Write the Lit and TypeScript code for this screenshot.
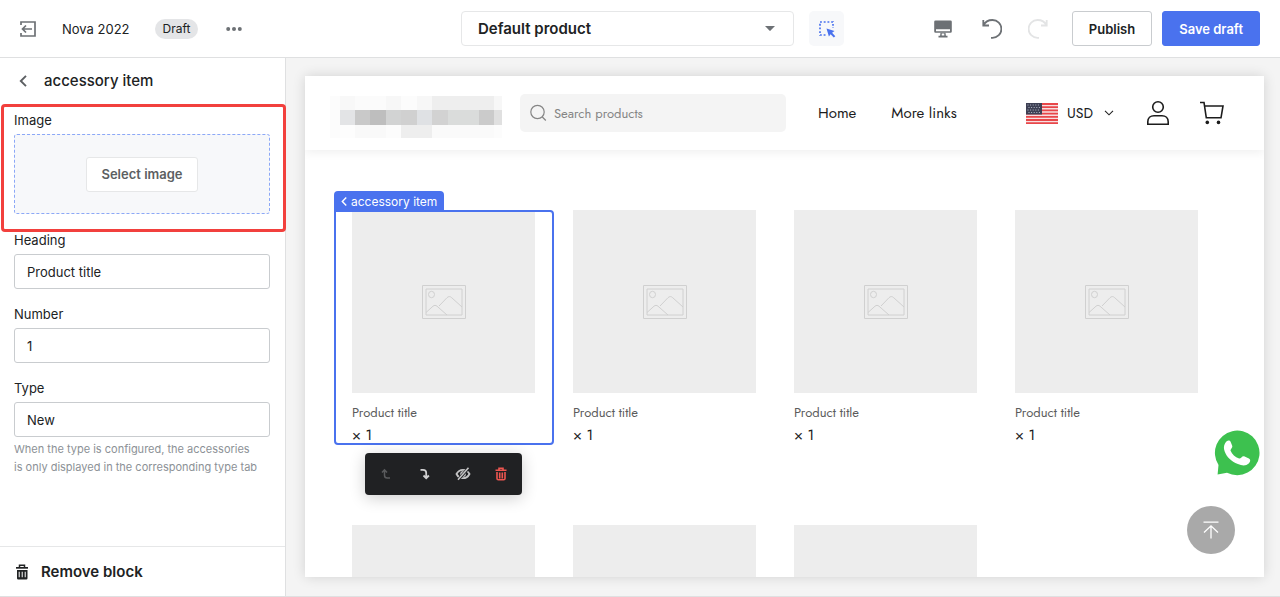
import { LitElement, html, svg, css } from "lit";
import { customElement, property } from "lit/decorators.js";

const LOGO_TILES: [number, number, number, number, string][] = [
  [0, 0, 10, 42, "#fcfcfc"],
  [10, 0, 15, 14, "#f8f8f8"], [25, 0, 31, 14, "#fbfbfb"], [56, 0, 15, 14, "#f7f7f7"],
  [71, 0, 16, 14, "#fcfcfc"], [87, 0, 15, 14, "#f7f7f7"], [102, 0, 62, 14, "#eeeeee"],
  [164, 0, 8, 14, "#f7f7f7"],
  [10, 14, 15, 15, "#e3e4e6"], [25, 14, 15, 15, "#c9c9c9"], [40, 14, 16, 15, "#bebebe"],
  [56, 14, 15, 15, "#d2d3d3"], [71, 14, 16, 15, "#d0d0d0"], [87, 14, 15, 15, "#dfe1e4"],
  [102, 14, 16, 15, "#d2d2d2"], [118, 14, 31, 15, "#dadcdb"], [149, 14, 15, 15, "#cbcbcb"],
  [164, 14, 8, 15, "#e0e0e0"],
  [10, 29, 15, 13, "#fdfdfd"], [25, 29, 31, 13, "#f9f9f9"], [56, 29, 15, 13, "#fcfcfc"],
  [71, 29, 31, 13, "#eeeeee"], [102, 29, 62, 13, "#fafafa"], [164, 29, 8, 13, "#fcfcfc"],
];

const icons = {
  exit: svg`<svg width="18" height="18" viewBox="0 0 18 18" fill="none" stroke="#6d7175" stroke-width="1.7"><path d="M2 5V2h14v14H2v-3M13 9H3.500M7 5.500 3.500 9 7 12.500"/></svg>`,
  dots: svg`<svg width="16" height="6" viewBox="0 0 16 6" fill="#6d7175"><circle cx="2.200" cy="3" r="2"/><circle cx="8" cy="3" r="2"/><circle cx="13.800" cy="3" r="2"/></svg>`,
  picker: svg`<svg width="18" height="18" viewBox="0 0 18 18"><path d="M2 2h13v13H2z" fill="none" stroke="#4a72ee" stroke-width="1.700" stroke-dasharray="1.900 1.820"/><path d="M8 8h10v10H8z" fill="#f7f8fa"/><path d="m8.500 8.500 8 2.600-2.400 1.700 3.200 3.400-1.500 1.400-3.200-3.400-1.700 2.300z" fill="#4a72ee"/></svg>`,
  desktop: svg`<svg width="18" height="18" viewBox="0 0 18 18" fill="#6d7175"><path fill-rule="evenodd" d="M1.500.5h15a1.300 1.300 0 0 1 1.300 1.300v9.700a1.300 1.300 0 0 1-1.300 1.300h-15A1.300 1.300 0 0 1 .2 11.500V1.800A1.300 1.300 0 0 1 1.500.5zM2 9.300v1.900h14V9.300z"/><path d="M6.500 12.800h5l.4 2.900h1.600v1.700h-9v-1.700h1.600z"/><path d="M7.700 13.500h2.600v2H7.700z" fill="#fff"/></svg>`,
  undo: svg`<svg width="20" height="20" viewBox="0 0 20 20" fill="none" stroke="currentColor" stroke-width="1.800"><path d="M1.300 1v5.500H7M1.600 6.300C3 3 6.500 1 10.500 1a8.800 8.800 0 0 1 0 17.800H9"/></svg>`,
  redo: svg`<svg width="20" height="20" viewBox="0 0 20 20" fill="none" stroke="currentColor" stroke-width="1.800"><path d="M18.700 1v5.500H13M18.400 6.300C17 3 13.500 1 9.500 1a8.800 8.800 0 0 0 0 17.800H11"/></svg>`,
  back: svg`<svg width="8" height="12" viewBox="0 0 8 12" fill="none" stroke="currentColor" stroke-width="1.900"><path d="M7 .8 1.800 6 7 11.200"/></svg>`,
  trash: svg`<svg width="14" height="16" viewBox="0 0 14 16"><path d="M4.500 3V1.200h5V3" fill="none" stroke="currentColor" stroke-width="1.500"/><path d="M1 3h12v1.700H1z" fill="currentColor"/><path fill-rule="evenodd" d="M2 6h10.500v8.300a1.200 1.200 0 0 1-1.200 1.200H3.200A1.200 1.200 0 0 1 2 14.300zM3.700 7.700v5.500h1V7.700zm3 0v5.500h1V7.700zm3 0v5.500h1V7.700z" fill="currentColor"/></svg>`,
  search: svg`<svg width="18" height="18" viewBox="0 0 18 18" fill="none" stroke="#858585" stroke-width="1.200"><circle cx="7.500" cy="8" r="6.700"/><path d="m12.300 13 3.500 3.500"/></svg>`,
  user: svg`<svg width="24" height="26" viewBox="0 0 24 26" fill="none" stroke="#1c1c1c" stroke-width="1.600"><circle cx="12" cy="7" r="5.300"/><path d="M1.800 24.200v-2.400c0-3.600 2.600-6 6.200-6h8c3.600 0 6.200 2.400 6.200 6v2.400z"/></svg>`,
  cart: svg`<svg width="26" height="24" viewBox="0 0 26 24" fill="none" stroke="#1c1c1c" stroke-width="1.600"><path d="M1 1.500h4l2.300 15.300H22L24 5H5.600"/><circle cx="8.300" cy="21.400" r="1.800" fill="#1c1c1c" stroke="none"/><circle cx="19.500" cy="21.400" r="1.800" fill="#1c1c1c" stroke="none"/></svg>`,
  picture: svg`<svg width="44" height="34" viewBox="0 0 44 34" fill="none" stroke="#d0d0d0"><path d="M.5.5h43v33H.5zM4 4h36v26H4z"/><ellipse cx="9.500" cy="9.500" rx="3" ry="3.200"/><path d="m4 27.500 7-6.300c1.200-1.100 2.800-1.100 4 0l10 8.800M17 21l8-8.300c1.400-1.500 3.300-1.500 4.700 0L40 22"/></svg>`,
  moveUp: svg`<svg width="12" height="12" viewBox="0 0 12 12" fill="none" stroke="#5a5b5d" stroke-width="1.500"><path d="M3.500 2v5.200c0 1.800.9 2.800 2.700 2.800H9M1 4.500 3.500 1.800 6 4.500"/></svg>`,
  moveDown: svg`<svg width="12" height="12" viewBox="0 0 12 12" fill="none" stroke="#d0d0d1" stroke-width="1.800"><path d="M1.500 1.900H4C6 1.900 7.200 3 7.200 4.800V10M4.500 7.500l2.700 2.700 2.700-2.700"/></svg>`,
  hide: svg`<svg width="16" height="14" viewBox="0 0 16 14" fill="none" stroke="#c4c4c5" stroke-width="1.800"><path d="M1.500 7C3 4 5.300 2.800 8 2.800S13 4 14.500 7C13 10 10.700 11.200 8 11.200S3 10 1.500 7z"/><circle cx="8" cy="7" r="2" fill="#c4c4c5"/><path d="M13.500 1 3 13" stroke="#202123" stroke-width="3"/><path d="M13.500.8 3 12.800" stroke-width="1.500"/></svg>`,
  remove: svg`<svg width="12" height="14" viewBox="0 0 12 14" fill="none" stroke="#ee5650" stroke-width="1.600"><path d="M.5 3.200h11M4 3V1.300h4V3"/><path d="M2 5v6.500q0 1.300 1.300 1.300h5.400q1.300 0 1.300-1.300V5M4.700 5.500v6M7.300 5.500v6"/></svg>`,
  flag: svg`<svg width="32" height="21" viewBox="0 0 32 21"><path d="M0 0h32v21H0z" fill="#f7dfe0"/><path d="M0 1h32M0 4.200h32M0 7.400h32M0 10.600h32M0 13.800h32M0 17h32M0 20.200h32" stroke="#e8474a" stroke-width="1.800"/><path d="M0 0h16v11.500H0z" fill="#3d4054"/><path d="M1.500 2h13M2.500 4.500h12M1.500 7h13M2.500 9.500h12" stroke="#b4b8c6" stroke-dasharray="1 1.600"/></svg>`,
  whatsapp: svg`<svg width="46" height="46" viewBox="0 0 46 46"><path d="M3.600 44.500 4.500 35A22.300 22.300 0 1 1 13 42.700z" fill="#3dc14f"/><path d="M11 13.500c1.600-3.300 4.500-4 5.700-1.500l1.500 3.700c.7 1.900-2.100 3.700-1.600 5.100 1.500 3.600 4.400 6.300 8.500 7.700 1.600.5 3.100-3 5-2.200l4.800 2.200c2 1.100 1.500 3.300-.2 5-2.600 2.500-6.500 2.400-10.800.6C17 31.300 12.800 27 10.700 21.500c-1.200-3-1-5.600.3-8z" fill="#fff"/></svg>`,
  top: svg`<svg width="16" height="18" viewBox="0 0 16 18" fill="none" stroke="#fff" stroke-width="1.300"><path d="M.5 1.200h15M8 17.500V5M1 11.500 8 4.800l7 6.700"/></svg>`,
  caret: svg`<svg width="10" height="5" viewBox="0 0 10 5"><path d="M0 0h10L5.600 4.600q-.6.600-1.200 0z" fill="#6d7175"/></svg>`,
  chevron: svg`<svg width="10" height="6" viewBox="0 0 10 6" fill="none" stroke="#222" stroke-width="1.100"><path d="m1 .8 4 4 4-4"/></svg>`,
};

const resets = css`
  :host, * { box-sizing: border-box; }
  button, input, select { font: inherit; color: inherit; margin: 0; outline: none; }
  button { display: flex; align-items: center; justify-content: center; padding: 0; border: 0; background: none; }
  select { appearance: none; border: 0; background: none; padding: 0; }
  svg { display: block; flex: none; }
`;

@customElement("editor-bar")
class EditorBar extends LitElement {
  static styles = [resets, css`
    :host { display: grid; grid-template-columns: 1fr auto 1fr; align-items: center; height: 58px; padding: 0 20px 0 19px; background: #fff; border-bottom: 1px solid #dfe0e1; }
    .group { display: flex; align-items: center; }
    .center { margin-left: 26px; }
    .name { margin-left: 25px; font-size: 13px; }
    .badge { margin-left: 25px; padding: 0 8px; height: 20px; line-height: 20px; border-radius: 10px; background: #e4e5e7; font-size: 12px; }
    .more { margin-left: 28px; }
    .template { position: relative; display: flex; align-items: center; }
    .template select { width: 333px; height: 35px; padding: 0 16px; border: 1px solid #e6e7e8; border-radius: 4px; font-size: 15px; font-weight: 600; }
    .template svg { position: absolute; right: 19px; pointer-events: none; }
    .picker { width: 35px; height: 35px; margin-left: 15px; border-radius: 5px; background: #f7f8fa; }
    .actions { justify-content: flex-end; }
    .tool { color: #6d7175; margin-right: 30px; }
    .tool.redo { color: #e3e4e5; margin-right: 24px; }
    .tool.undo { margin-right: 26px; }
    .btn { height: 35px; padding: 0 16px; border-radius: 3px; font-size: 13px; font-weight: 600; border: 1px solid #c9cccf; background: #fff; white-space: nowrap; }
    .btn.primary { margin-left: 10px; color: #fff; background: #4a72ee; border-color: #4a72ee; }
  `];
  render() {
    return html`
      <div class="group">
        <button aria-label="Exit">${icons.exit}</button>
        <span class="name">Nova 2022</span>
        <span class="badge">Draft</span>
        <button class="more" aria-label="More actions">${icons.dots}</button>
      </div>
      <div class="group center">
        <label class="template"><select aria-label="Template"><option>Default product</option></select>${icons.caret}</label>
        <button class="picker" aria-label="Inspect">${icons.picker}</button>
      </div>
      <div class="group actions">
        <button class="tool" aria-label="Desktop view">${icons.desktop}</button>
        <button class="tool undo" aria-label="Undo">${icons.undo}</button>
        <button class="tool redo" aria-label="Redo" disabled>${icons.redo}</button>
        <button class="btn">Publish</button>
        <button class="btn primary">Save draft</button>
      </div>`;
  }
}

@customElement("block-settings")
class BlockSettings extends LitElement {
  static styles = [resets, css`
    :host { display: flex; flex-direction: column; background: #fff; border-right: 1px solid #dfe0e1; font-size: 13px; }
    .title { display: flex; align-items: center; gap: 17px; height: 45px; padding-left: 19px; color: #5c5f62; }
    h2 { margin: 0; font-size: 15px; font-weight: 500; color: #202223; }
    .fields { flex: 1; padding: 0 15px 0 14px; }
    .image { position: relative; padding: 7px 0 16px; }
    .image::after { content: ""; position: absolute; z-index: 2; inset: 1px -16px -2px -13px; border: 3px solid #f2403d; border-radius: 4px; pointer-events: none; }
    .label { display: block; line-height: 20px; margin-bottom: 4px; }
    .drop { display: flex; align-items: center; justify-content: center; height: 80px; border: 1px dashed #8ca8f7; border-radius: 3px; background: #f7f8fa; }
    .select { height: 35px; padding: 0 14px; border: 1px solid #e6e7e8; border-radius: 3px; background: #fff; color: #5c5f62; font-size: 13px; font-weight: 600; }
    .field { margin-bottom: 15px; }
    input { width: 100%; height: 35px; padding: 0 12px; border: 1px solid #c9cccf; border-radius: 3px; background: #fff; }
    .help { margin: 3px 0 0; font-size: 11px; line-height: 18px; color: #8c9196; }
    .remove { justify-content: flex-start; gap: 12px; height: 50px; padding-left: 15px; border-top: 1px solid #e6e7e8; font-size: 15px; font-weight: 600; }
  `];
  render() {
    return html`
      <div class="title"><button aria-label="Back">${icons.back}</button><h2>accessory item</h2></div>
      <div class="fields">
        <div class="image">
          <span class="label" id="image-label">Image</span>
          <div class="drop" role="group" aria-labelledby="image-label"><button class="select">Select image</button></div>
        </div>
        <div class="field"><label class="label" for="heading">Heading</label><input id="heading" .value=${"Product title"}></div>
        <div class="field"><label class="label" for="number">Number</label><input id="number" .value=${"1"}></div>
        <div class="field"><label class="label" for="type">Type</label><input id="type" .value=${"New"}>
          <p class="help">When the type is configured, the accessories<br>is only displayed in the corresponding type tab</p>
        </div>
      </div>
      <button class="remove">${icons.trash}<span>Remove block</span></button>`;
  }
}

@customElement("accessory-card")
class AccessoryCard extends LitElement {
  @property({ type: Boolean }) selected = false;
  static styles = [resets, css`
    :host { display: block; position: relative; padding: 0 20px 0 18px; }
    .media { display: flex; align-items: center; justify-content: center; aspect-ratio: 1; background: #ededed; }
    .title { margin-top: 8px; line-height: 24px; font-size: 13px; color: #5c5c5c; }
    .count { line-height: 20px; font-size: 15px; color: #1c1c1c; }
    .frame { position: absolute; inset: 0 1px 0 0; border: 2px solid #4a72ee; border-radius: 0 4px 4px 4px; pointer-events: none; }
    .tag { position: absolute; left: 0; bottom: calc(100% - 1px); display: flex; align-items: center; gap: 4px; height: 20px; padding: 0 7px; border-radius: 4px 4px 0 0; background: #4a72ee; color: #fff; font: 12px Inter, sans-serif; white-space: nowrap; }
    .tag svg { width: 6px; height: 9px; }
    .tools { position: absolute; z-index: 1; top: calc(100% + 8px); left: 31px; display: grid; grid-template-columns: repeat(4, 38px); justify-content: center; width: 157px; height: 42px; border-radius: 4px; background: #202123; box-shadow: 0 3px 16px rgba(0, 0, 0, 0.2); }
  `];
  render() {
    return html`
      <div class="media">${icons.picture}</div>
      <div class="title">Product title</div>
      <div class="count">× 1</div>
      ${this.selected ? html`
        <div class="frame"></div>
        <button class="tag">${icons.back}accessory item</button>
        <div class="tools">
          <button aria-label="Move up" disabled>${icons.moveUp}</button>
          <button aria-label="Move down">${icons.moveDown}</button>
          <button aria-label="Hide">${icons.hide}</button>
          <button aria-label="Remove">${icons.remove}</button>
        </div>` : ""}`;
  }
}

@customElement("store-preview")
class StorePreview extends LitElement {
  static styles = [resets, css`
    :host { display: block; position: relative; overflow: hidden; background: #fff; box-shadow: 0 0 12px rgba(0, 0, 0, 0.14); font-family: Jost, Lato, sans-serif; }
    header { display: flex; align-items: center; height: 74px; padding: 0 39px 0 25px; box-shadow: 0 2px 10px rgba(0, 0, 0, 0.07); }
    .logo { margin-top: 8px; }
    .search { display: flex; align-items: center; gap: 6px; width: 266px; height: 38px; margin-left: 18px; padding: 0 10px; border-radius: 5px; background: #f4f4f4; }
    .search input { flex: 1; min-width: 0; padding: 0; border: 0; background: none; font-size: 13px; }
    .search input::placeholder { color: #858585; opacity: 1; }
    nav { display: flex; gap: 35px; margin: 0 auto 0 32px; font-size: 15px; white-space: nowrap; }
    nav a { color: #1c1c1c; text-decoration: none; }
    .currency { position: relative; display: flex; align-items: center; gap: 9px; margin-right: 32px; }
    .currency select { width: 47px; font-size: 14px; }
    .currency .arrow { position: absolute; right: 0; pointer-events: none; }
    .user { margin-right: 29px; }
    .grid { display: grid; grid-template-columns: repeat(4, 1fr); row-gap: 80px; padding: 60px 46px 0 29px; }
    .float { position: absolute; }
    .chat { right: 4px; bottom: 101px; }
    .top { right: 29px; bottom: 23px; width: 48px; height: 48px; border-radius: 50%; background: #a9a9a9; }
  `];
  render() {
    return html`
      <header>
        <svg class="logo" width="172" height="42" viewBox="0 0 172 42" role="img" aria-label="Store logo">
          ${LOGO_TILES.map(([x, y, w, h, c]) => svg`<rect x=${x} y=${y} width=${w} height=${h} fill=${c} shape-rendering="crispEdges"/>`)}
        </svg>
        <label class="search">${icons.search}<input type="text" aria-label="Search products" placeholder="Search products"></label>
        <nav><a href="#home">Home</a><a href="#more">More links</a></nav>
        <label class="currency">${icons.flag}<select aria-label="Currency"><option>USD</option></select><span class="arrow">${icons.chevron}</span></label>
        <button class="user" aria-label="Account">${icons.user}</button>
        <button aria-label="Cart">${icons.cart}</button>
      </header>
      <div class="grid">
        ${[0, 1, 2, 3, 4, 5, 6].map((i) => html`<accessory-card ?selected=${i === 0}></accessory-card>`)}
      </div>
      <button class="float chat" aria-label="Chat on WhatsApp">${icons.whatsapp}</button>
      <button class="float top" aria-label="Back to top">${icons.top}</button>`;
  }
}

@customElement("app-root")
class AppRoot extends LitElement {
  static styles = [resets, css`
    :host { display: flex; flex-direction: column; height: 100vh; font: 14px Inter, sans-serif; color: #202223; background: #f4f4f4; border-bottom: 1px solid #dfe0e1; }
    .body { flex: 1; min-height: 0; display: grid; grid-template-columns: 286px 1fr; }
    .canvas { display: grid; min-height: 0; padding: 18px 16px 19px 19px; overflow: hidden; }
  `];
  render() {
    return html`
      <editor-bar></editor-bar>
      <div class="body">
        <block-settings></block-settings>
        <main class="canvas"><store-preview></store-preview></main>
      </div>`;
  }
}
